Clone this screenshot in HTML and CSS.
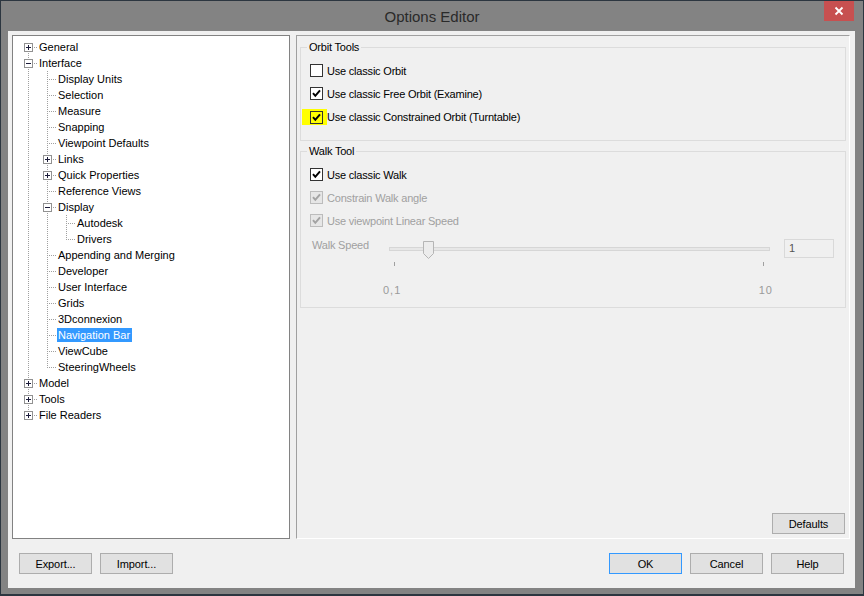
FILE: index.html
```html
<!DOCTYPE html>
<html>
<head>
<meta charset="utf-8">
<title>Options Editor</title>
<link rel="stylesheet" href="styles.css">
</head>
<body>
<div class="window">
  <div class="titlebar">
    <span></span>
    <span class="title">Options Editor</span>
    <span class="close"><svg width="10" height="10" viewBox="0 0 10 10"><path d="M1.5 1.5L8.5 8.5M8.5 1.5L1.5 8.5" stroke="#fff" stroke-width="1.8" fill="none"/></svg></span>
  </div>
  <div class="client">
    <div class="main">
      <div class="tree">
        <div class="row"><span class="g f"><span class="exp p"></span></span><span class="tx">General</span></div>
        <div class="row"><span class="g t"><span class="exp m"></span></span><span class="tx">Interface</span></div>
        <div class="row"><span class="g i"></span><span class="g t"></span><span class="tx">Display Units</span></div>
        <div class="row"><span class="g i"></span><span class="g t"></span><span class="tx">Selection</span></div>
        <div class="row"><span class="g i"></span><span class="g t"></span><span class="tx">Measure</span></div>
        <div class="row"><span class="g i"></span><span class="g t"></span><span class="tx">Snapping</span></div>
        <div class="row"><span class="g i"></span><span class="g t"></span><span class="tx">Viewpoint Defaults</span></div>
        <div class="row"><span class="g i"></span><span class="g t"><span class="exp p"></span></span><span class="tx">Links</span></div>
        <div class="row"><span class="g i"></span><span class="g t"><span class="exp p"></span></span><span class="tx">Quick Properties</span></div>
        <div class="row"><span class="g i"></span><span class="g t"></span><span class="tx">Reference Views</span></div>
        <div class="row"><span class="g i"></span><span class="g t"><span class="exp m"></span></span><span class="tx">Display</span></div>
        <div class="row"><span class="g i"></span><span class="g i"></span><span class="g t"></span><span class="tx">Autodesk</span></div>
        <div class="row"><span class="g i"></span><span class="g i"></span><span class="g l"></span><span class="tx">Drivers</span></div>
        <div class="row"><span class="g i"></span><span class="g t"></span><span class="tx">Appending and Merging</span></div>
        <div class="row"><span class="g i"></span><span class="g t"></span><span class="tx">Developer</span></div>
        <div class="row"><span class="g i"></span><span class="g t"></span><span class="tx">User Interface</span></div>
        <div class="row"><span class="g i"></span><span class="g t"></span><span class="tx">Grids</span></div>
        <div class="row"><span class="g i"></span><span class="g t"></span><span class="tx">3Dconnexion</span></div>
        <div class="row"><span class="g i"></span><span class="g t"></span><span class="tx sel">Navigation Bar</span></div>
        <div class="row"><span class="g i"></span><span class="g t"></span><span class="tx">ViewCube</span></div>
        <div class="row"><span class="g i"></span><span class="g l"></span><span class="tx">SteeringWheels</span></div>
        <div class="row"><span class="g t"><span class="exp p"></span></span><span class="tx">Model</span></div>
        <div class="row"><span class="g t"><span class="exp p"></span></span><span class="tx">Tools</span></div>
        <div class="row"><span class="g l"><span class="exp p"></span></span><span class="tx">File Readers</span></div>
      </div>
      <div class="pane">
        <fieldset class="group orbit">
          <legend>Orbit Tools</legend>
          <div class="chk"><span class="box"></span><span>Use classic Orbit</span></div>
          <div class="chk"><span class="box"><svg width="11" height="11" viewBox="0 0 11 11"><path d="M2 5.2L4.3 7.8L9 2.3" stroke="#000" stroke-width="2" fill="none"/></svg></span><span>Use classic Free Orbit (Examine)</span></div>
          <div class="chk"><span class="hl"><span class="box yel"><svg width="11" height="11" viewBox="0 0 11 11"><path d="M2 5.2L4.3 7.8L9 2.3" stroke="#000" stroke-width="2" fill="none"/></svg></span></span><span>Use classic Constrained Orbit (Turntable)</span></div>
        </fieldset>
        <fieldset class="group walk">
          <legend>Walk Tool</legend>
          <div class="chk"><span class="box"><svg width="11" height="11" viewBox="0 0 11 11"><path d="M2 5.2L4.3 7.8L9 2.3" stroke="#000" stroke-width="2" fill="none"/></svg></span><span>Use classic Walk</span></div>
          <div class="chk dis"><span class="box"><svg width="11" height="11" viewBox="0 0 11 11"><path d="M2 5.2L4.3 7.8L9 2.3" stroke="#a3a3a3" stroke-width="2" fill="none"/></svg></span><span>Constrain Walk angle</span></div>
          <div class="chk dis"><span class="box"><svg width="11" height="11" viewBox="0 0 11 11"><path d="M2 5.2L4.3 7.8L9 2.3" stroke="#a3a3a3" stroke-width="2" fill="none"/></svg></span><span>Use viewpoint Linear Speed</span></div>
          <div class="speed">
            <span class="speed-label">Walk Speed</span>
            <div class="slider-col">
              <div class="slider">
                <span class="track"></span>
                <svg class="thumb" width="11" height="18" viewBox="0 0 11 18"><path d="M0.5 0.5H10.5V12.5L5.5 17.5L0.5 12.5Z" fill="#ececec" stroke="#b5b5b5"/></svg>
              </div>
              <div class="ticks"><span class="tick"></span><span class="tick"></span></div>
              <div class="scale"><span>0,1</span><span>10</span></div>
            </div>
            <span class="field">1</span>
          </div>
        </fieldset>
        <button class="btn defaults">Defaults</button>
      </div>
    </div>
    <div class="footer">
      <button class="btn">Export...</button>
      <button class="btn">Import...</button>
      <span class="fill"></span>
      <button class="btn ok">OK</button>
      <button class="btn">Cancel</button>
      <button class="btn">Help</button>
    </div>
  </div>
</div>
</body>
</html>
```
FILE: styles.css
```css
* { box-sizing: border-box; }
html, body { margin: 0; padding: 0; }
body {
  width: 864px;
  height: 596px;
  overflow: hidden;
  background: #838383;
  font-family: "Liberation Sans", Arial, sans-serif;
}
.window {
  width: 864px;
  height: 596px;
  border: 1px solid #2c3640;
  border-bottom-width: 2px;
  background: #838383;
  display: flex;
  flex-direction: column;
}
.titlebar {
  height: 30px;
  flex: none;
  display: grid;
  grid-template-columns: 1fr auto 1fr;
}
.title {
  align-self: center;
  padding-top: 1px;
  font-size: 15px;
  color: #2a2a2a;
}
.close {
  justify-self: end;
  align-self: start;
  width: 30px;
  height: 20px;
  margin-right: 9px;
  background: #c75050;
  display: flex;
  align-items: center;
  justify-content: center;
}
.close svg { display: block; }
.client {
  margin: 0 8px 0 7px;
  height: 557px;
  background: #f0f0f0;
  padding: 4px 5px 0 4px;
}
.main {
  display: flex;
  gap: 6px;
  height: 504px;
}
/* tree */
.tree {
  width: 278px;
  flex: none;
  background: #fff;
  border: 1px solid #828282;
  padding: 3px 0 0 6px;
  font-size: 11px;
  color: #000;
}
.row {
  display: flex;
  height: 16px;
  align-items: center;
}
.g {
  flex: none;
  width: 19px;
  height: 16px;
  align-self: stretch;
  background-repeat: no-repeat;
}
.g.i {
  background-image: repeating-linear-gradient(to bottom, #a0a0a0 0 1px, transparent 1px 2px);
  background-size: 1px 16px;
  background-position: 9px 0;
}
.g.t {
  background-image: repeating-linear-gradient(to bottom, #a0a0a0 0 1px, transparent 1px 2px),
                    repeating-linear-gradient(to right, #a0a0a0 0 1px, transparent 1px 2px);
  background-size: 1px 16px, 9px 1px;
  background-position: 9px 0, 11px 8px;
}
.g.l {
  background-image: repeating-linear-gradient(to bottom, #a0a0a0 0 1px, transparent 1px 2px),
                    repeating-linear-gradient(to right, #a0a0a0 0 1px, transparent 1px 2px);
  background-size: 1px 9px, 9px 1px;
  background-position: 9px 0, 11px 8px;
}
.g.f {
  background-image: repeating-linear-gradient(to bottom, #a0a0a0 0 1px, transparent 1px 2px),
                    repeating-linear-gradient(to right, #a0a0a0 0 1px, transparent 1px 2px);
  background-size: 1px 8px, 9px 1px;
  background-position: 9px 8px, 11px 8px;
}
.exp {
  display: block;
  width: 9px;
  height: 9px;
  margin: 4px 0 0 5px;
  border: 1px solid #919191;
  background-color: #fff;
  background-repeat: no-repeat;
}
.exp.p {
  background-image: linear-gradient(#1b1b3a, #1b1b3a), linear-gradient(#1b1b3a, #1b1b3a);
  background-size: 5px 1px, 1px 5px;
  background-position: 1px 3px, 3px 1px;
}
.exp.m {
  background-image: linear-gradient(#1b1b3a, #1b1b3a);
  background-size: 5px 1px;
  background-position: 1px 3px;
}
.tx {
  padding: 0 2px 0 1px;
  line-height: 14px;
  height: 14px;
  white-space: nowrap;
}
.tx.sel {
  background: #3399ff;
  color: #fff;
}
/* right pane */
.pane {
  width: 554px;
  flex: none;
  border-left: 1px solid #a0a0a0;
  border-top: 1px solid #a0a0a0;
  border-right: 1px solid #fff;
  border-bottom: 1px solid #fff;
  padding: 4px 3px 4px 3px;
  display: flex;
  flex-direction: column;
  font-size: 11px;
  letter-spacing: -0.2px;
}
.group {
  margin: 0;
  border: 1px solid #dcdcdc;
  padding: 4px 8px 12px 9px;
  min-width: 0;
}
.group legend {
  padding: 0 2px;
  margin-left: -3px;
  line-height: 15px;
  color: #000;
}
.group.walk {
  margin-top: 3px;
  padding-bottom: 10px;
}
.chk {
  display: flex;
  align-items: center;
  height: 23px;
  gap: 4px;
  color: #000;
  white-space: nowrap;
}
.chk.dis { color: #a0a0a0; }
.box {
  width: 13px;
  height: 13px;
  flex: none;
  border: 1px solid #333;
  background: #fff;
  display: flex;
  align-items: center;
  justify-content: center;
}
.box svg { display: block; }
.chk.dis .box {
  border-color: #bcbcbc;
  background: #e6e6e6;
}
.hl {
  display: flex;
  align-items: center;
  height: 16px;
  margin-left: -8px;
  margin-right: -4px;
  padding: 1px 4px 0 8px;
  background: #ffff00;
}
.box.yel { background: #ffff00; }
.speed {
  display: grid;
  grid-template-columns: 77px 381px 50px;
  margin-top: 4px;
  margin-left: 2px;
  align-items: start;
}
.speed-label {
  padding-top: 2px;
  line-height: 15px;
  color: #a0a0a0;
  white-space: nowrap;
}
.slider-col { display: flex; flex-direction: column; }
.slider {
  position: relative;
  height: 18px;
  margin-top: 5px;
}
.track {
  display: block;
  margin-top: 6px;
  height: 4px;
  border: 1px solid #d6d6d6;
  background: #e7e7e7;
}
.thumb {
  position: absolute;
  left: 34px;
  top: 0;
  display: block;
}
.ticks {
  display: flex;
  justify-content: space-between;
  padding: 0 6px 0 5px;
  margin-top: 3px;
  height: 4px;
}
.tick {
  width: 1px;
  height: 4px;
  background: #a0a0a0;
}
.scale {
  display: flex;
  justify-content: space-between;
  margin: 18px -3px 0 -6px;
  line-height: 13px;
  color: #9a9a9a;
  letter-spacing: 1px;
}
.field {
  margin-top: 3px;
  margin-left: 14px;
  width: 50px;
  height: 19px;
  border: 1px solid #d9d9d9;
  background: #f0f0f0;
  padding: 0 4px;
  line-height: 17px;
  color: #555;
}
.speed {
  grid-template-columns: 77px 381px 64px;
}
.btn {
  width: 73px;
  height: 21px;
  padding: 0;
  margin: 0;
  border: 1px solid #adadad;
  background: #e1e1e1;
  font-family: "Liberation Sans", Arial, sans-serif;
  font-size: 11px;
  letter-spacing: -0.1px;
  color: #000;
  flex: none;
}
.btn.ok { border-color: #3399ff; }
.defaults {
  margin-top: auto;
  align-self: flex-end;
  margin-right: 1px;
}
.footer {
  display: flex;
  gap: 8px;
  margin-top: 14px;
  padding: 0 6px 0 7px;
}
.footer .fill { flex: 1; }
```
